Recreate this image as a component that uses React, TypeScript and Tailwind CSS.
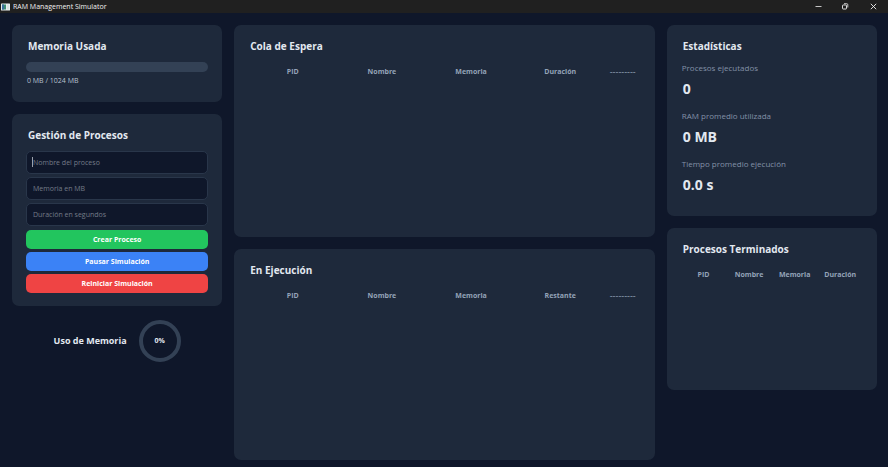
import type { ReactNode } from "react";

function Card({ title, className = "", children }: { title: string; className?: string; children: ReactNode }) {
  return (
    <section className={`rounded-[7px] bg-[#1e293b] px-[14px] pt-[13px] ${className}`}>
      <h2 className="px-[2px] text-[10px] leading-4 font-bold text-[#e2e8f0]">{title}</h2>
      {children}
    </section>
  );
}

function ProcessTable({ label, columns, spacer }: { label: string; columns: string[]; spacer?: boolean }) {
  return (
    <table aria-label={label} className="mt-3 w-full table-fixed text-[7px] leading-3 text-[#94a3b8]">
      <thead>
        <tr>
          {columns.map((column) => (
            <th key={column} scope="col" className="p-0 text-center font-bold">
              {column}
            </th>
          ))}
          {spacer && (
            <th scope="col" className="w-9 p-0 text-center text-[9px] leading-3 font-normal">
              ---------
            </th>
          )}
        </tr>
      </thead>
      <tbody />
    </table>
  );
}

function Field({ label, active }: { label: string; active?: boolean }) {
  return (
    <div className="relative flex">
      <input
        type="text"
        aria-label={label}
        placeholder={label}
        className="h-[23px] w-full rounded-[5px] border border-[#29364a] bg-[#0f172a] px-[6px] text-[7px] text-[#e2e8f0] outline-none placeholder:text-[#747b88]"
      />
      {active && <span className="absolute top-[6px] left-[6px] h-[10px] w-px bg-[#9aa1ad]" />}
    </div>
  );
}

function Stat({ label, value }: { label: string; value: string }) {
  return (
    <div>
      <dt className="px-px text-[8px] leading-3 text-[#8391a7]">{label}</dt>
      <dd className="mt-[5px] px-[2px] text-[14px] leading-5 font-bold text-[#e2e8f0]">{value}</dd>
    </div>
  );
}

function TitleBar() {
  return (
    <header className="flex h-[13px] items-center bg-[#202020] text-[#f1f1f1]">
      <svg className="ml-px h-2 w-[9px]" viewBox="0 0 9 8" aria-hidden="true">
        <rect y="0.5" width="9" height="7" rx="0.5" fill="#e8eeee" />
        <rect x="1" y="1.5" width="4" height="5" fill="#3f8f76" />
        <rect x="1" y="1.5" width="2" height="5" fill="#3c6f9c" />
        <rect x="6" y="1.5" width="2" height="5" fill="#d9e2e2" />
      </svg>
      <span className="ml-[3px] text-[7px] leading-3">RAM Management Simulator</span>
      <div className="ml-auto flex h-full">
        <button type="button" aria-label="Minimizar" className="flex w-[27px] items-center justify-center">
          <svg className="h-[7px] w-[7px]" viewBox="0 0 7 7" aria-hidden="true">
            <path d="M.5 3.5h6" stroke="#c4c4c4" />
          </svg>
        </button>
        <button type="button" aria-label="Restaurar" className="flex w-[27px] items-center justify-center">
          <svg className="h-[7px] w-[7px]" viewBox="0 0 7 7" fill="none" stroke="currentColor" aria-hidden="true">
            <rect x="0.5" y="2" width="4" height="4" rx="0.6" strokeWidth="0.9" />
            <path d="M2 .7H4.8q1 0 1 1V4.5" strokeWidth="0.8" />
          </svg>
        </button>
        <button type="button" aria-label="Cerrar" className="flex w-[29px] items-center justify-center">
          <svg className="h-[7px] w-[7px]" viewBox="0 0 7 7" aria-hidden="true">
            <path d="M.8.8l5.4 5.4M6.2.8L.8 6.2" stroke="currentColor" strokeWidth="0.9" />
          </svg>
        </button>
      </div>
    </header>
  );
}

const buttonClass = "h-[19px] w-full rounded-[5px] text-[7px] leading-3 font-bold text-white";

export default function App() {
  return (
    <div className="flex min-h-screen flex-col bg-[#0f172a] font-['Open_Sans','Noto_Sans',sans-serif]">
      <TitleBar />
      <main className="grid flex-1 grid-cols-[1fr_2fr_1fr] gap-3 pt-3 pr-[11px] pb-[7px] pl-3">
        <div className="flex flex-col gap-3">
          <Card title="Memoria Usada" className="pb-[15px]">
            <div
              role="progressbar"
              aria-label="Memoria usada"
              aria-valuenow={0}
              aria-valuemin={0}
              aria-valuemax={1024}
              className="mt-2 h-[10px] rounded-[5px] bg-[#334155]"
            />
            <p className="mt-[3px] px-px text-[7px] leading-3 text-[#b6c0ce]">0 MB / 1024 MB</p>
          </Card>

          <Card title="Gestión de Procesos" className="pb-[13px]">
            <form className="mt-2">
              <div className="flex flex-col gap-[3px]">
                <Field label="Nombre del proceso" active />
                <Field label="Memoria en MB" />
                <Field label="Duración en segundos" />
              </div>
              <div className="mt-1 flex flex-col gap-[3px]">
                <button type="button" className={`${buttonClass} bg-[#22c55e]`}>
                  Crear Proceso
                </button>
                <button type="button" className={`${buttonClass} bg-[#3b82f6]`}>
                  Pausar Simulación
                </button>
                <button type="button" className={`${buttonClass} bg-[#ef4444]`}>
                  Reiniciar Simulación
                </button>
              </div>
            </form>
          </Card>

          <div className="flex items-center justify-center gap-3 pt-[2px]">
            <h2 className="text-[9px] leading-4 font-bold text-[#e2e8f0]">Uso de Memoria</h2>
            <div className="flex size-[42px] items-center justify-center rounded-full border-4 border-[#334155] text-[7px] font-bold text-[#e2e8f0]">
              0%
            </div>
          </div>
        </div>

        <div className="grid grid-rows-2 gap-3">
          <Card title="Cola de Espera">
            <ProcessTable label="Cola de Espera" columns={["PID", "Nombre", "Memoria", "Duración"]} spacer />
          </Card>
          <Card title="En Ejecución">
            <ProcessTable label="En Ejecución" columns={["PID", "Nombre", "Memoria", "Restante"]} spacer />
          </Card>
        </div>

        <div className="flex flex-col gap-3">
          <Card title="Estadísticas" className="pb-[21px]">
            <dl className="mt-2 flex flex-col gap-[11px]">
              <Stat label="Procesos ejecutados" value="0" />
              <Stat label="RAM promedio utilizada" value="0 MB" />
              <Stat label="Tiempo promedio ejecución" value="0.0 s" />
            </dl>
          </Card>
          <Card title="Procesos Terminados" className="min-h-[162px]">
            <ProcessTable label="Procesos Terminados" columns={["PID", "Nombre", "Memoria", "Duración"]} />
          </Card>
        </div>
      </main>
    </div>
  );
}
